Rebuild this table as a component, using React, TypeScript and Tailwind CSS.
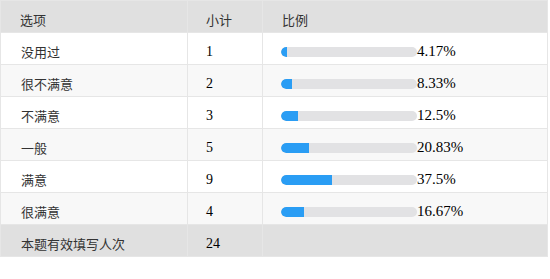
const rows = [
  { label: "没用过", count: 1, pct: 4.17, text: "4.17%" },
  { label: "很不满意", count: 2, pct: 8.33, text: "8.33%" },
  { label: "不满意", count: 3, pct: 12.5, text: "12.5%" },
  { label: "一般", count: 5, pct: 20.83, text: "20.83%" },
  { label: "满意", count: 9, pct: 37.5, text: "37.5%" },
  { label: "很满意", count: 4, pct: 16.67, text: "16.67%" },
];

const sans = "font-['Microsoft_YaHei','Noto_Sans_CJK_SC',sans-serif]";
const serif = "font-['Liberation_Serif','Noto_Sans_CJK_SC',serif]";

export default function App() {
  return (
    <div className="w-[550px] h-[279px] bg-white">
      <table className="w-[548px] border-collapse table-fixed border border-[#e6e6e6]">
        <colgroup>
          <col className="w-[187px]" />
          <col className="w-[75px]" />
          <col />
        </colgroup>
        <thead>
          <tr className="h-[32px] bg-[#e0e0e0]">
            <th className={`border border-[#e6e6e6] pl-[19px] pt-[6px] text-left font-normal text-[13px] text-[#333] ${sans}`}>选项</th>
            <th className={`border border-[#e6e6e6] pl-[18px] pt-[6px] text-left font-normal text-[13px] text-[#333] ${sans}`}>小计</th>
            <th className={`border border-[#e6e6e6] pl-[19px] pt-[6px] text-left font-normal text-[13px] text-[#333] ${sans}`}>比例</th>
          </tr>
        </thead>
        <tbody>
          {rows.map((r, i) => (
            <tr key={r.label} className={`h-[32px] ${i % 2 === 1 ? "bg-[#f8f8f8]" : "bg-white"}`}>
              <td className={`border border-[#e6e6e6] pl-[20px] pt-[6px] text-[13px] text-[#333] ${sans}`}>{r.label}</td>
              <td className={`border border-[#e6e6e6] pl-[18px] pt-[6px] text-[14px] text-black ${serif}`}>{r.count}</td>
              <td className="border border-[#e6e6e6] pl-[18px] pt-[6px]">
                <div className="flex items-center">
                  <div className="w-[136px] h-[10px] rounded-full bg-[#e2e2e4] overflow-hidden">
                    <div className="h-full bg-[#2a9df4] rounded-l-full" style={{ width: `${r.pct}%` }} />
                  </div>
                  <span className={`text-[15px] leading-none text-black ${serif}`}>{r.text}</span>
                </div>
              </td>
            </tr>
          ))}
          <tr className="h-[32px] bg-[#e0e0e0]">
            <td className={`border border-[#e6e6e6] pl-[20px] pt-[6px] text-[13px] text-[#333] ${sans}`}>本题有效填写人次</td>
            <td className={`border border-[#e6e6e6] pl-[18px] pt-[6px] text-[14px] text-black ${serif}`}>24</td>
            <td className="border border-[#e6e6e6]" />
          </tr>
        </tbody>
      </table>
    </div>
  );
}
